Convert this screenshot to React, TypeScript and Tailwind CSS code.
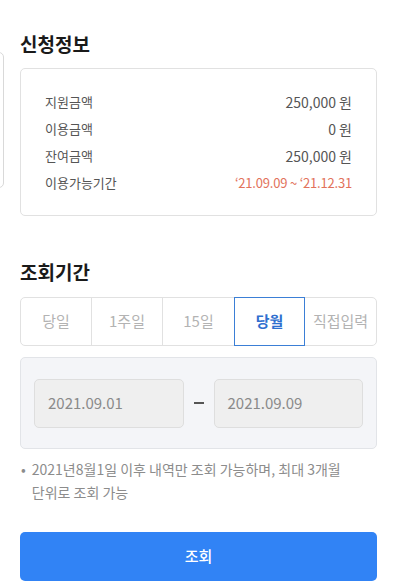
const rows = [
    { label: "지원금액", value: "250,000 원" },
    { label: "이용금액", value: "0 원" },
    { label: "잔여금액", value: "250,000 원" },
];

const tabs = ["당일", "1주일", "15일", "당월", "직접입력"];

export default function App() {
    return (
        <div
            className="relative min-h-[586px] w-[400px] overflow-hidden bg-white pt-[30px] pr-[23px] pl-5"
            style={{ fontFamily: '"Noto Sans CJK KR", "Noto Sans", sans-serif' }}
        >
            {/* peek of previous card */}
            <div className="absolute top-[52px] left-[-20px] h-[136px] w-[24px] rounded-[5px] border border-[#d9d9d9]" />

            <h2 className="text-[19px] leading-[28px] font-bold text-[#1a1a1a]">
                신청정보
            </h2>

            <section className="mt-[10px] flex h-[148px] flex-col justify-center gap-[7px] rounded-[5px] border border-[#e1e1e1] px-6">
                {rows.map((r) => (
                    <div
                        key={r.label}
                        className="flex items-center justify-between text-[13px] leading-[20px] text-[#555]"
                    >
                        <span>{r.label}</span>
                        <span className="text-[14px]">{r.value}</span>
                    </div>
                ))}
                <div className="flex items-center justify-between text-[13px] leading-[20px] text-[#555]">
                    <span>이용가능기간</span>
                    <span className="text-[13px] tracking-[-0.2px] text-[#e2725b]">
                        ‘21.09.09 ~ ‘21.12.31
                    </span>
                </div>
            </section>

            <h2 className="mt-[42px] text-[19px] leading-[28px] font-bold text-[#1a1a1a]">
                조회기간
            </h2>

            <div className="mt-[11px] grid h-[49px] grid-cols-5 rounded-[5px] border border-[#e1e1e1]">
                {tabs.map((t, i) => {
                    const active = t === "당월";
                    return (
                        <button
                            key={t}
                            className={
                                active
                                    ? "-my-px flex items-center justify-center border border-[#3b7fd6] text-[15px] font-bold text-[#2f6fcf]"
                                    : i < 2
                                      ? "flex items-center justify-center border-r border-[#e1e1e1] text-[15px] text-[#b3b3b3]"
                                      : "flex items-center justify-center text-[15px] text-[#b3b3b3]"
                            }
                        >
                            {t}
                        </button>
                    );
                })}
            </div>

            <div className="mt-[11px] flex h-[92px] items-center gap-[10px] rounded-[5px] border border-[#e2e4e8] bg-[#f4f5f8] px-[13px]">
                <div className="flex h-[49px] flex-1 items-center rounded-[5px] border border-[#dedede] bg-[#efefef] px-[13px] text-[15px] text-[#8a8a8a]">
                    2021.09.01
                </div>
                <span className="h-[2px] w-[10px] bg-[#555]" />
                <div className="flex h-[49px] flex-1 items-center rounded-[5px] border border-[#dedede] bg-[#efefef] px-[13px] text-[15px] text-[#8a8a8a]">
                    2021.09.09
                </div>
            </div>

            <div className="mt-[9px] flex gap-[6px] pl-[1px] text-[14px] leading-[23px] text-[#8c8c8c]">
                <span>•</span>
                <p>
                    2021년8월1일 이후 내역만 조회 가능하며, 최대 3개월
                    <br />
                    단위로 조회 가능
                </p>
            </div>

            <button className="mt-[28px] flex h-[49px] w-full items-center justify-center rounded-[5px] bg-[#3183f5] text-[15px] font-medium text-white">
                조회
            </button>
        </div>
    );
}
